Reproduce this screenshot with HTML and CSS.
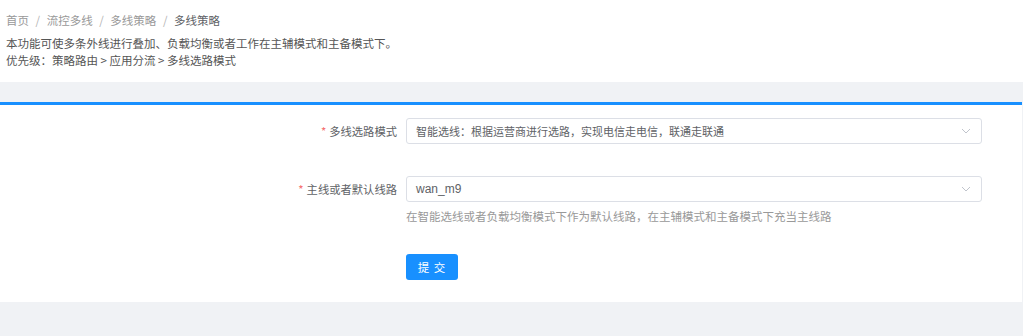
FILE: index.html
```html
<!DOCTYPE html>
<html lang="zh-CN">
<head>
    <meta charset="UTF-8">
    <title>多线策略</title>
    <link rel="stylesheet" href="styles.css">
</head>
<body>
    <div class="page-head">
        <div class="breadcrumb">
            <span class="crumb">首页</span>
            <span class="sep">/</span>
            <span class="crumb">流控多线</span>
            <span class="sep">/</span>
            <span class="crumb">多线策略</span>
            <span class="sep">/</span>
            <span class="crumb current">多线策略</span>
        </div>
        <p class="desc">本功能可使多条外线进行叠加、负载均衡或者工作在主辅模式和主备模式下。</p>
        <p class="desc">优先级：策略路由 &gt; 应用分流 &gt; 多线选路模式</p>
    </div>

    <div class="gap"></div>

    <div class="card">
        <form class="form">
            <div class="form-item">
                <label class="label"><span class="req">*</span>多线选路模式</label>
                <div class="control">
                    <div class="select">
                        <span class="value">智能选线：根据运营商进行选路，实现电信走电信，联通走联通</span>
                        <svg class="arrow" width="10" height="6" viewBox="0 0 10 6"><path d="M1 1l4 4 4-4" fill="none" stroke="#c0c4cc" stroke-width="1"/></svg>
                    </div>
                </div>
            </div>

            <div class="form-item has-help">
                <label class="label"><span class="req">*</span>主线或者默认线路</label>
                <div class="control">
                    <div class="select">
                        <span class="value latin">wan_m9</span>
                        <svg class="arrow" width="10" height="6" viewBox="0 0 10 6"><path d="M1 1l4 4 4-4" fill="none" stroke="#c0c4cc" stroke-width="1"/></svg>
                    </div>
                    <div class="help">在智能选线或者负载均衡模式下作为默认线路，在主辅模式和主备模式下充当主线路</div>
                </div>
            </div>

            <div class="form-item">
                <div class="label"></div>
                <div class="control">
                    <button type="button" class="btn">提 交</button>
                </div>
            </div>
        </form>
    </div>
</body>
</html>
```

FILE: styles.css
```css
body {
    margin: 0;
    background-color: #f0f2f5;
    font-family: "Noto Sans CJK SC", "Noto Sans", sans-serif;
    font-size: 11.3px;
    color: #606266;
}

.page-head {
    background-color: #ffffff;
    padding: 11px 6px 0 6px;
    height: 71px;
}

.breadcrumb {
    line-height: 18px;
    color: #999999;
    margin-bottom: 6px;
    font-size: 11.5px;
}

.breadcrumb .sep {
    margin: 0 4px;
    color: #b4b4b4;
}

.breadcrumb .current {
    color: #606266;
}

.desc {
    margin: 0;
    line-height: 17px;
    color: #555555;
    font-size: 11.5px;
}

.gap {
    height: 20px;
}

.card {
    background-color: #ffffff;
    border-top: 3px solid #1890ff;
    width: 1022px;
    padding: 13px 0 22px 0;
}

.form-item {
    display: flex;
    margin-bottom: 32px;
}

.form-item.has-help {
    margin-bottom: 30px;
}

.form-item:last-child {
    margin-bottom: 0;
}

.label {
    width: 397px;
    flex: none;
    text-align: right;
    line-height: 26px;
    color: #606266;
    margin-right: 9px;
}

.req {
    color: #f56c6c;
    margin-right: 3px;
}

.control {
    width: 576px;
}

.select {
    box-sizing: border-box;
    height: 26px;
    border: 1px solid #dcdfe6;
    border-radius: 3px;
    display: flex;
    align-items: center;
    justify-content: space-between;
    padding: 0 10px 0 9px;
    color: #606266;
    font-size: 11px;
}

.latin {
    font-family: "Liberation Sans", "Noto Sans CJK SC", sans-serif;
    font-size: 12px;
}

.arrow {
    flex: none;
}

.help {
    margin-top: 6px;
    line-height: 16px;
    color: #999999;
    font-size: 11.5px;
}

.btn {
    width: 52px;
    height: 26px;
    border: none;
    border-radius: 3px;
    background-color: #1890ff;
    color: #ffffff;
    font-family: "Noto Sans CJK SC", sans-serif;
    font-size: 11.5px;
    letter-spacing: 1px;
    padding: 0;
}
```
